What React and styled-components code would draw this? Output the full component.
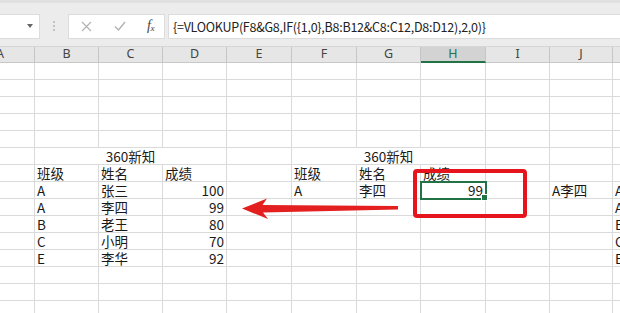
import React from "react";
import styled, { createGlobalStyle } from "styled-components";

const GlobalStyle = createGlobalStyle`
  html, body { margin: 0; padding: 0; background: #fff; }
  body { font-family: "Noto Sans CJK SC", "Noto Sans", sans-serif; }
  * { box-sizing: border-box; }
`;

const Screen = styled.div`
  position: relative;
  width: 620px;
  height: 313px;
  overflow: hidden;
  background: #fff;
`;

const FormulaBar = styled.div`
  display: flex;
  align-items: center;
  height: 47px;
  padding-top: 3px;
  border-top: 3px solid #e0e0e0;
  background: #ececec;
  border-bottom: 1px solid #d6d6d6;
`;

const NameBox = styled.div`
  width: 40px;
  height: 25px;
  background: #fff;
  border: 1px solid #dcdcdc;
  border-left: none;
  display: flex;
  align-items: center;
  justify-content: flex-end;
  padding-right: 6px;
`;

const Caret = styled.span`
  width: 0;
  height: 0;
  border-left: 3.5px solid transparent;
  border-right: 3.5px solid transparent;
  border-top: 4px solid #666;
`;

const Grip = styled.div`
  width: 28px;
  display: flex;
  flex-direction: column;
  align-items: center;
  gap: 2px;
  span {
    width: 2px;
    height: 2px;
    border-radius: 1px;
    background: #b5b5b5;
  }
`;

const ButtonBox = styled.div`
  width: 97px;
  height: 25px;
  background: #fff;
  border: 1px solid #dcdcdc;
  display: flex;
  align-items: center;
  justify-content: space-between;
  padding: 0 10px 0 12px;
  color: #b0b0b0;
`;

const Fx = styled.span`
  font-family: "Liberation Serif", "DejaVu Serif", serif;
  font-style: italic;
  font-size: 14px;
  color: #444;
  letter-spacing: -0.5px;
  sub {
    font-size: 9px;
    vertical-align: -1px;
  }
`;

const FormulaInput = styled.div`
  flex: 1;
  height: 25px;
  margin-left: 3px;
  background: #fff;
  border: 1px solid #dcdcdc;
  border-right: none;
  display: flex;
  align-items: center;
  padding-left: 4px;
  font-family: "Noto Sans CJK SC", "Noto Sans", sans-serif;
  font-size: 12.5px;
  letter-spacing: -0.25px;
  color: #222;
  white-space: nowrap;
`;

const COLS = [35, 64, 64, 64, 65, 65, 64, 65, 64, 63, 40];
const LETTERS = ["A", "B", "C", "D", "E", "F", "G", "H", "I", "J", "K"];

const Sheet = styled.div`
  display: grid;
  grid-template-columns: ${COLS.map((c) => c + "px").join(" ")};
  grid-template-rows: 16px;
  grid-auto-rows: 17px;
`;

const ColHeader = styled.div`
  display: flex;
  align-items: center;
  justify-content: center;
  background: ${(p) => (p.$active ? "#d3d3d3" : "#e6e6e6")};
  border-right: 1px solid #c6c6c6;
  border-bottom: ${(p) => (p.$active ? "2px solid #217346" : "1px solid #c8c8c8")};
  color: ${(p) => (p.$active ? "#217346" : "#444")};
  font-family: "Noto Sans", sans-serif;
  font-size: 12.5px;
  line-height: 1;
  padding-bottom: ${(p) => (p.$active ? "0" : "1px")};
  ${(p) => (p.$clip ? "justify-content: flex-start; padding-left: 0; text-indent: -4px;" : "")}
`;

const Cell = styled.div`
  position: relative;
  grid-column: span ${(p) => p.$span || 1};
  border-right: 1px solid #dadada;
  border-bottom: 1px solid #dadada;
  display: flex;
  align-items: flex-end;
  justify-content: ${(p) =>
    p.$align === "right" ? "flex-end" : p.$align === "center" ? "center" : "flex-start"};
  padding: 0 2px 0 2px;
  font-size: 13.5px;
  line-height: 16px;
  color: #1a1a1a;
  white-space: nowrap;
  ${(p) =>
    p.$selected
      ? `
    outline: 2px solid #217346;
    outline-offset: -1px;
    z-index: 1;
    &::after {
      content: "";
      position: absolute;
      right: -3px;
      bottom: -3px;
      width: 5px;
      height: 5px;
      background: #217346;
      border: 1px solid #fff;
    }
  `
      : ""}
`;

const RedFrame = styled.div`
  position: absolute;
  left: 413px;
  top: 169px;
  width: 114px;
  height: 49px;
  border: 4px solid #e5141d;
  border-radius: 4px;
  z-index: 3;
`;

const ArrowLayer = styled.svg`
  position: absolute;
  left: 0;
  top: 0;
  z-index: 3;
  pointer-events: none;
`;

const R = (t) => ({ t, a: "right" });

const ROWS = {
  6: [null, { t: "360新知", a: "center", s: 3 }, null, { t: "360新知", a: "center", s: 3 }, null, null, null],
  7: [null, "班级", "姓名", "成绩", null, "班级", "姓名", "成绩", null, null, null],
  8: [null, "A", "张三", R("100"), null, "A", "李四", { t: "99", a: "right", sel: true }, null, "A李四", "A"],
  9: [null, "A", "李四", R("99"), null, null, null, null, null, null, "A"],
  10: [null, "B", "老王", R("80"), null, null, null, null, null, null, "B"],
  11: [null, "C", "小明", R("70"), null, null, null, null, null, null, "C"],
  12: [null, "E", "李华", R("92"), null, null, null, null, null, null, "E"],
};

function renderRow(r) {
  const def = ROWS[r] || Array(11).fill(null);
  return def.map((c, i) => {
    const key = `${r}-${i}`;
    if (c == null) return <Cell key={key} />;
    if (typeof c === "string") return <Cell key={key}>{c}</Cell>;
    return (
      <Cell key={key} $align={c.a} $span={c.s} $selected={c.sel}>
        {c.t}
      </Cell>
    );
  });
}

export default function App() {
  const rows = [];
  for (let r = 1; r <= 15; r++) rows.push(...renderRow(r));
  return (
    <>
      <GlobalStyle />
      <Screen>
        <FormulaBar>
          <NameBox>
            <Caret />
          </NameBox>
          <Grip>
            <span />
            <span />
            <span />
          </Grip>
          <ButtonBox>
            <svg width="11" height="11" viewBox="0 0 11 11" stroke="#b3b3b3" strokeWidth="1.2" fill="none">
              <path d="M1 1 L10 10 M10 1 L1 10" />
            </svg>
            <svg width="12" height="10" viewBox="0 0 12 10" stroke="#b3b3b3" strokeWidth="1.4" fill="none">
              <path d="M1 5.5 L4.5 9 L11 1" />
            </svg>
            <Fx>
              f<sub>x</sub>
            </Fx>
          </ButtonBox>
          <FormulaInput>{"{=VLOOKUP(F8&G8,IF({1,0},B8:B12&C8:C12,D8:D12),2,0)}"}</FormulaInput>
        </FormulaBar>
        <Sheet>
          {LETTERS.map((l, i) => (
            <ColHeader key={l} $active={l === "H"} $clip={i === 0}>
              {l}
            </ColHeader>
          ))}
          {rows}
        </Sheet>
        <RedFrame />
        <ArrowLayer width="620" height="313" viewBox="0 0 620 313">
          <polygon
            points="242,208.5 267,198.5 262.5,205 398,206 398,209.5 263,212.5 268,219"
            fill="#e3201f"
          />
        </ArrowLayer>
      </Screen>
    </>
  );
}
